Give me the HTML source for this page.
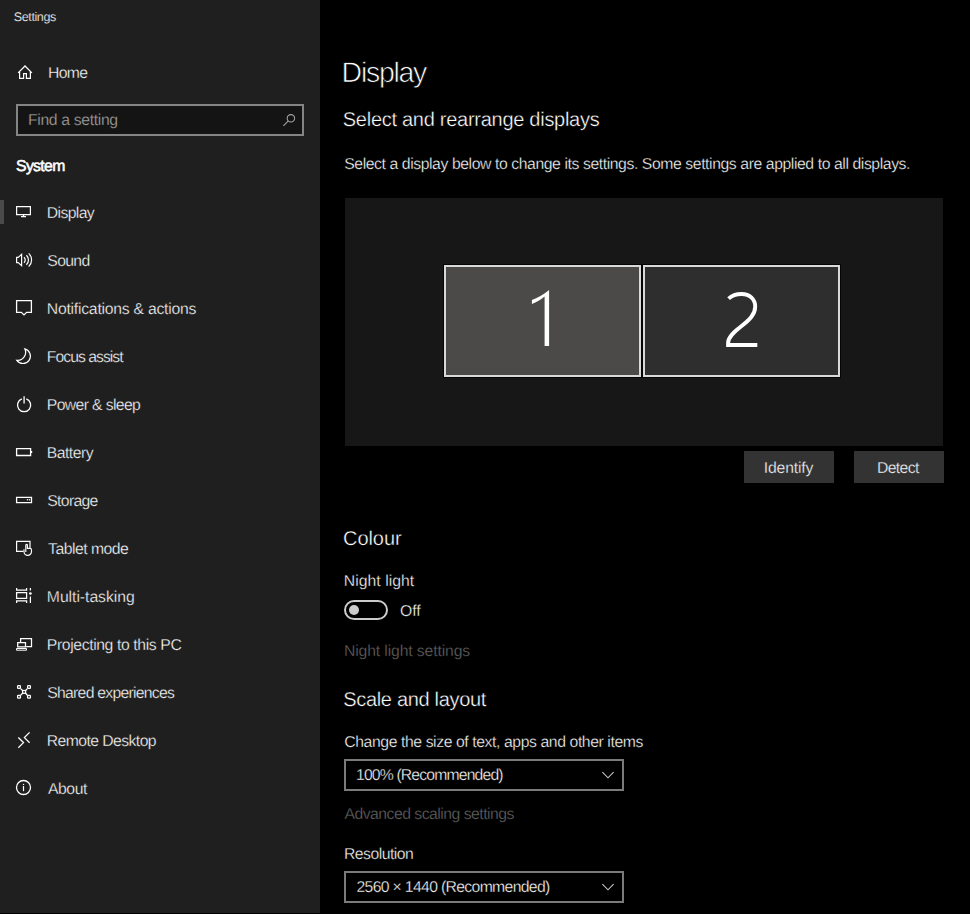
<!DOCTYPE html>
<html><head><meta charset="utf-8"><title>Settings</title>
<style>
html,body{margin:0;padding:0;}
body{width:970px;height:914px;background:#000;position:relative;overflow:hidden;font-family:"Liberation Sans",sans-serif;}
.t{position:absolute;white-space:nowrap;font-family:"Liberation Sans",sans-serif;text-rendering:geometricPrecision;}
.b{position:absolute;box-sizing:border-box;}
.ic{position:absolute;left:0;top:0;}
</style></head><body>
<div class="b" style="left:0;top:0;width:320px;height:913px;background:#1f1f1f"></div>
<div class="b" style="left:16px;top:104px;width:288px;height:32px;border:2px solid #858585;background:#141414"></div>
<div class="b" style="left:0;top:200px;width:4px;height:24px;background:#4b4a48"></div>
<div class="b" style="left:345px;top:198px;width:598px;height:248px;background:#171717"></div>
<div class="b" style="left:443px;top:264px;width:199px;height:114px;border:1px solid #050505"></div>
<div class="b" style="left:642px;top:264px;width:199px;height:114px;border:1px solid #050505"></div>
<div class="b" style="left:444px;top:265px;width:197px;height:112px;border:2px solid #d9d9d9;background:#4b4a48"></div>
<div class="b" style="left:643px;top:265px;width:197px;height:112px;border:2px solid #d9d9d9;background:#2e2e2e"></div>
<div class="b" style="left:744px;top:451px;width:90px;height:32px;background:#333"></div>
<div class="b" style="left:854px;top:451px;width:90px;height:32px;background:#333"></div>
<div class="b" style="left:344px;top:600px;width:44px;height:20px;border:2px solid #cccccc;border-radius:10px"></div>
<div class="b" style="left:349px;top:605px;width:10px;height:10px;border-radius:5px;background:#cccccc"></div>
<div class="b" style="left:344px;top:759px;width:280px;height:32px;border:2px solid #7a7a7a"></div>
<div class="b" style="left:344px;top:871px;width:280px;height:32px;border:2px solid #7a7a7a"></div>

<svg class="ic" width="320" height="914" viewBox="0 0 320 914" fill="none" stroke="#fff" stroke-width="1.2">
 <!-- home -->
 <path d="M18.1,72.9 L25,66 L31.9,72.9" stroke-width="1.25"/><path d="M19.6,71.4 V78.4 H23.6 V73.6 H26.4 V78.4 H30.4 V71.4" stroke-width="1.2"/>
 <!-- search -->
 <g stroke="#a2a2a2" stroke-width="1.1"><circle cx="290.9" cy="118.3" r="3.7"/><path d="M288.3,120.9 L283.4,125.8"/></g>
 <!-- display -->
 <path d="M16.6,206.6 H30.4 V214.6 H16.6 Z M23.5,214.6 V216.5 M21,216.6 H26"/>
 <!-- sound -->
 <path d="M16.6,257.4 H18.2 L21.6,254.4 V265.6 L18.2,262.6 H16.6 Z"/>
 <path d="M24,257.2 A3.8,3.8 0 0 1 24,262.8 M26.4,255.3 A6.4,6.4 0 0 1 26.4,264.7 M28.7,253.4 A9,9 0 0 1 28.7,266.6"/>
 <!-- notifications -->
 <path d="M16.6,300.6 H31.4 V312.3 H26.6 L24,314.9 L21.4,312.3 H16.6 Z" stroke-width="1.3"/>
 <!-- moon -->
 <path d="M24.8,348.8 A7.47,7.47 0 1 1 16.8,360.3 A8.03,8.03 0 0 0 24.8,348.8 Z"/>
 <!-- power -->
 <path d="M21.9,398.9 A6.6,6.6 0 1 0 26.3,398.9 M24.1,396.2 V403.6" stroke-width="1.3"/>
 <!-- battery -->
 <path d="M16.6,448.6 H30.6 V455.5 H16.6 Z" stroke-width="1.3"/>
 <rect x="31" y="451" width="1.2" height="2" fill="#fff" stroke="none"/>
 <!-- storage -->
 <path d="M16.6,497.4 H31.5 V502.6 H16.6 Z" stroke-width="1.3"/>
 <circle cx="27.5" cy="499.7" r="0.75" fill="#fff" stroke="none"/><circle cx="29.5" cy="499.7" r="0.75" fill="#fff" stroke="none"/>
 <!-- tablet -->
 <path d="M23.5,551.3 H16.6 V541.4 H30 V548.4"/>
 <path d="M25.8,552 V545.2 A0.8,0.8 0 0 1 27.4,545.2 V548.4 H30 A1.5,1.5 0 0 1 31.5,549.9 V551.6 A3.75,3.75 0 0 1 24,551.6 V549.2" stroke-width="1.15"/>
 <!-- multitasking -->
 <path d="M16.6,588 V590.2 H26.6 V588 M16.6,592.6 H26.6 V598.4 H16.6 Z M16.6,603 V600.8 H26.6 V603 M30.4,588 V590.6 M30.4,596.4 V603" stroke-width="1.25"/>
 <circle cx="30.4" cy="593.5" r="1.35" fill="#fff" stroke="none"/>
 <!-- projecting -->
 <path d="M20.6,641.9 V638.5 H31.5 V646.6 H26.1" stroke-width="1.25"/>
 <path d="M17.7,646.9 V642.5 H25.5 V646.9 Z" stroke-width="1.25"/><path d="M16.5,648.5 H26.5 V650.2 H16.5 Z" stroke-width="1"/>
 <!-- shared -->
 <g stroke-width="1.25"><rect x="17.6" y="685.6" width="2.8" height="2.8" rx="0.6"/><rect x="27.6" y="685.6" width="2.8" height="2.8" rx="0.6"/>
 <rect x="17.6" y="695.4" width="2.8" height="2.8" rx="0.6"/><rect x="27.6" y="695.4" width="2.8" height="2.8" rx="0.6"/>
 <rect x="22.6" y="690.5" width="3" height="2.8"/>
 <path d="M20.6,688.6 L22.6,690.5 M27.4,688.6 L25.6,690.5 M20.6,695.2 L22.6,693.3 M27.4,695.2 L25.6,693.3"/></g>
 <!-- remote -->
 <path d="M18.3,737.5 L23.5,742.6 L18.3,747.7 M29.6,732.4 L24.4,737.6 L29.6,742.8" stroke-width="1.3"/>
 <!-- about -->
 <circle cx="23.5" cy="787.5" r="7" stroke-width="1.3"/>
 <path d="M23.5,786 V791.2" stroke-width="1.2"/><circle cx="23.5" cy="784.4" r="0.7" fill="#fff" stroke="none"/>
</svg>


<svg class="ic" width="970" height="914" viewBox="0 0 970 914" fill="none" stroke="#fff">
 <path d="M549.1,289.9 V346.1 H544.6 V296.4 C541,299.4 536.5,302 531.9,303.9 V300.1 C537.2,298 543.6,294.4 549.1,289.9 Z" fill="#fff" stroke="none"/>
 <path d="M728.6,298.6 C732,295.4 736.5,294 741.5,294 C750,294 755.2,299.5 755.2,306.5 C755.2,314.5 749.5,320 741,326.5 C732.5,333 728.1,337.5 728.1,343 V345 H757.3" stroke-width="3.9"/>
 <path d="M602.4,772.2 L608,777.8 L613.6,772.2 M602.4,884.2 L608,889.8 L613.6,884.2" stroke="#c8c8c8" stroke-width="1.1"/>
</svg>

<div class="t" style="left:13.8px;top:11.0px;font-size:12.5px;line-height:12.5px;letter-spacing:-0.39px;color:#ffffff;-webkit-text-stroke:0.2px #1f1f1f">Settings</div><div class="t" style="left:48.0px;top:66.0px;font-size:15.75px;line-height:15.75px;letter-spacing:-0.639px;color:#ffffff;-webkit-text-stroke:0.3px #1f1f1f">Home</div><div class="t" style="left:28.0px;top:113.0px;font-size:15.75px;line-height:15.75px;letter-spacing:-0.345px;color:#a6a6a6;-webkit-text-stroke:0.3px #1f1f1f">Find a setting</div><div class="t" style="left:16.0px;top:159.0px;font-size:15.75px;line-height:15.75px;letter-spacing:-0.629px;color:#ffffff;-webkit-text-stroke:0.55px #fff">System</div><div class="t" style="left:46.8px;top:206.0px;font-size:15.75px;line-height:15.75px;letter-spacing:-0.624px;color:#ffffff;-webkit-text-stroke:0.3px #1f1f1f">Display</div><div class="t" style="left:47.3px;top:254.0px;font-size:15.75px;line-height:15.75px;letter-spacing:-0.666px;color:#ffffff;-webkit-text-stroke:0.3px #1f1f1f">Sound</div><div class="t" style="left:46.8px;top:302.0px;font-size:15.75px;line-height:15.75px;letter-spacing:-0.242px;color:#ffffff;-webkit-text-stroke:0.3px #1f1f1f">Notifications &amp; actions</div><div class="t" style="left:46.8px;top:350.0px;font-size:15.75px;line-height:15.75px;letter-spacing:-0.97px;color:#ffffff;-webkit-text-stroke:0.3px #1f1f1f">Focus assist</div><div class="t" style="left:46.8px;top:398.0px;font-size:15.75px;line-height:15.75px;letter-spacing:-0.624px;color:#ffffff;-webkit-text-stroke:0.3px #1f1f1f">Power &amp; sleep</div><div class="t" style="left:46.8px;top:446.0px;font-size:15.75px;line-height:15.75px;letter-spacing:-0.522px;color:#ffffff;-webkit-text-stroke:0.3px #1f1f1f">Battery</div><div class="t" style="left:47.3px;top:494.0px;font-size:15.75px;line-height:15.75px;letter-spacing:-0.683px;color:#ffffff;-webkit-text-stroke:0.3px #1f1f1f">Storage</div><div class="t" style="left:48.1px;top:542.0px;font-size:15.75px;line-height:15.75px;letter-spacing:-0.517px;color:#ffffff;-webkit-text-stroke:0.3px #1f1f1f">Tablet mode</div><div class="t" style="left:46.8px;top:590.0px;font-size:15.75px;line-height:15.75px;letter-spacing:-0.041px;color:#ffffff;-webkit-text-stroke:0.3px #1f1f1f">Multi-tasking</div><div class="t" style="left:46.8px;top:638.0px;font-size:15.75px;line-height:15.75px;letter-spacing:-0.384px;color:#ffffff;-webkit-text-stroke:0.3px #1f1f1f">Projecting to this PC</div><div class="t" style="left:47.3px;top:686.0px;font-size:15.75px;line-height:15.75px;letter-spacing:-0.737px;color:#ffffff;-webkit-text-stroke:0.3px #1f1f1f">Shared experiences</div><div class="t" style="left:46.8px;top:734.0px;font-size:15.75px;line-height:15.75px;letter-spacing:-0.577px;color:#ffffff;-webkit-text-stroke:0.3px #1f1f1f">Remote Desktop</div><div class="t" style="left:47.9px;top:782.0px;font-size:15.75px;line-height:15.75px;letter-spacing:-0.397px;color:#ffffff;-webkit-text-stroke:0.3px #1f1f1f">About</div>
<div class="t" style="left:341.6px;top:59.0px;font-size:28.5px;line-height:28.5px;letter-spacing:-1.285px;color:#ffffff;-webkit-text-stroke:0.7px #000">Display</div><div class="t" style="left:342.8px;top:110.0px;font-size:20px;line-height:20px;letter-spacing:-0.275px;color:#ffffff;-webkit-text-stroke:0.35px #000">Select and rearrange displays</div><div class="t" style="left:344.2px;top:157.0px;font-size:15.75px;line-height:15.75px;letter-spacing:-0.41px;color:#ffffff;-webkit-text-stroke:0.3px #000">Select a display below to change its settings. Some settings are applied to all displays.</div><div class="t" style="left:763.7px;top:461.0px;font-size:15.75px;line-height:15.75px;letter-spacing:-0.141px;color:#ffffff;-webkit-text-stroke:0.3px #333">Identify</div><div class="t" style="left:876.9px;top:461.0px;font-size:15.75px;line-height:15.75px;letter-spacing:-0.611px;color:#ffffff;-webkit-text-stroke:0.3px #333">Detect</div><div class="t" style="left:343.1px;top:529.0px;font-size:20px;line-height:20px;letter-spacing:-0.083px;color:#ffffff;-webkit-text-stroke:0.35px #000">Colour</div><div class="t" style="left:343.8px;top:574.0px;font-size:15.75px;line-height:15.75px;letter-spacing:0.038px;color:#ffffff;-webkit-text-stroke:0.3px #000">Night light</div><div class="t" style="left:400.1px;top:604.0px;font-size:15.75px;line-height:15.75px;letter-spacing:-0.145px;color:#ffffff;-webkit-text-stroke:0.3px #000">Off</div><div class="t" style="left:343.9px;top:644.0px;font-size:15.75px;line-height:15.75px;letter-spacing:-0.123px;color:#656565;-webkit-text-stroke:0.3px #000">Night light settings</div><div class="t" style="left:343.2px;top:690.0px;font-size:20px;line-height:20px;letter-spacing:-0.315px;color:#ffffff;-webkit-text-stroke:0.35px #000">Scale and layout</div><div class="t" style="left:344.3px;top:735.0px;font-size:15.75px;line-height:15.75px;letter-spacing:-0.406px;color:#ffffff;-webkit-text-stroke:0.3px #000">Change the size of text, apps and other items</div><div class="t" style="left:356.0px;top:768.0px;font-size:15.75px;line-height:15.75px;letter-spacing:-0.845px;color:#ffffff;-webkit-text-stroke:0.3px #000">100% (Recommended)</div><div class="t" style="left:344.5px;top:807.0px;font-size:15.75px;line-height:15.75px;letter-spacing:-0.508px;color:#656565;-webkit-text-stroke:0.3px #000">Advanced scaling settings</div><div class="t" style="left:344.0px;top:847.0px;font-size:15.75px;line-height:15.75px;letter-spacing:-0.505px;color:#ffffff;-webkit-text-stroke:0.3px #000">Resolution</div><div class="t" style="left:356.5px;top:880.0px;font-size:15.75px;line-height:15.75px;letter-spacing:-0.663px;color:#ffffff;-webkit-text-stroke:0.3px #000">2560 × 1440 (Recommended)</div>
</body></html>
